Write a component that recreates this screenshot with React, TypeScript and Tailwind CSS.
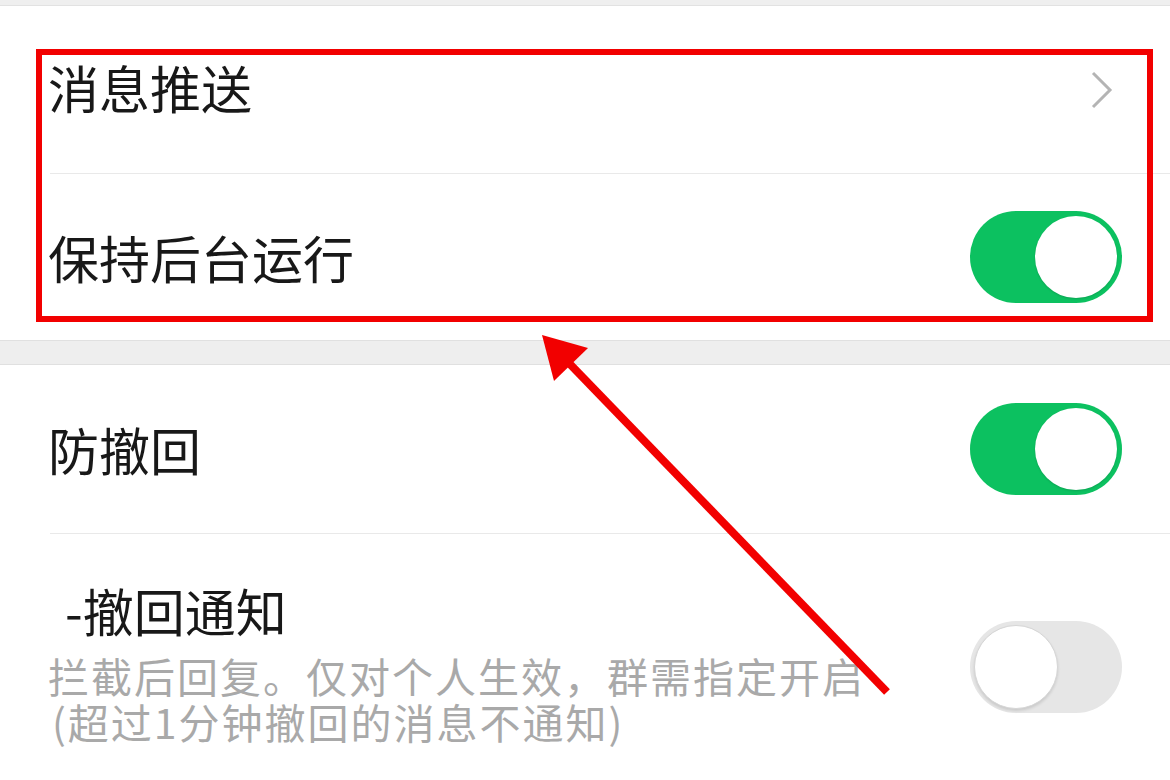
import React from 'react';

function Toggle({ on }: { on: boolean }) {
  if (on) {
    return (
      <div className="relative w-[152px] h-[92px] rounded-full bg-[#0cc160] shrink-0">
        <div className="absolute right-[5px] top-[5px] w-[82px] h-[82px] rounded-full bg-white shadow-[0_1px_2px_rgba(0,0,0,0.15)]" />
      </div>
    );
  }
  return (
    <div className="relative w-[152px] h-[92px] rounded-full bg-[#e6e6e6] shrink-0 mt-[9px]">
      <div className="absolute left-[4px] top-[4px] w-[84px] h-[84px] rounded-full bg-white border border-[#d6d6d6] shadow-[0_2px_3px_rgba(0,0,0,0.12)]" />
    </div>
  );
}

function Chevron() {
  return (
    <svg width="24" height="38" viewBox="0 0 24 38" className="shrink-0">
      <path d="M3 2 L20 19 L3 36" fill="none" stroke="#b4b4b4" strokeWidth="3" />
    </svg>
  );
}

export default function App() {
  return (
    <div className="relative w-full h-[780px] overflow-hidden bg-white font-['Noto_Sans_CJK_SC','Noto_Sans',sans-serif] text-[#181818]">
      {/* top strip */}
      <div className="h-[6px] bg-[#efefef] border-b border-[#e2e2e2]" />

      {/* section 1 */}
      <div className="flex items-center justify-between h-[167px] pl-[48px] pr-[56px]">
        <span className="text-[51px] leading-[51px] -mt-[4px]">消息推送</span>
        <Chevron />
      </div>
      <div className="ml-[50px] h-[1px] bg-[#e9e9e9]" />
      <div className="flex items-center justify-between h-[166px] pl-[48px] pr-[48px]">
        <span className="text-[51px] leading-[51px]">保持后台运行</span>
        <Toggle on />
      </div>

      {/* section gap */}
      <div className="h-[25px] bg-[#eeeeee] border-y border-[#e0e0e0]" />

      {/* section 2 */}
      <div className="flex items-center justify-between h-[168px] pl-[48px] pr-[48px]">
        <span className="text-[51px] leading-[51px]">防撤回</span>
        <Toggle on />
      </div>
      <div className="ml-[50px] h-[1px] bg-[#e9e9e9]" />
      <div className="flex items-center justify-between pt-[46px] pl-[48px] pr-[48px]">
        <div className="flex flex-col">
          <span className="pl-[17px] text-[51px] leading-[60px]">-撤回通知</span>
          <p className="mt-[12px] text-[41px] leading-[46px] tracking-[2px] text-[#a9a9a9]">
            拦截后回复。仅对个人生效，群需指定开启
            <br />
            <span className="ml-[4px]">(超过1分钟撤回的消息不通知)</span>
          </p>
        </div>
        <Toggle on={false} />
      </div>

      {/* annotation: red box */}
      <div className="absolute left-[36px] top-[49px] w-[1117px] h-[273px] border-[6px] border-[#f20000]" />

      {/* annotation: arrow */}
      <svg className="absolute left-0 top-0 pointer-events-none" width="1170" height="780" viewBox="0 0 1170 780">
        <line x1="887" y1="692" x2="566" y2="360" stroke="#f20000" strokeWidth="8" />
        <polygon points="542,335 588,348 554,381" fill="#f20000" />
      </svg>
    </div>
  );
}
